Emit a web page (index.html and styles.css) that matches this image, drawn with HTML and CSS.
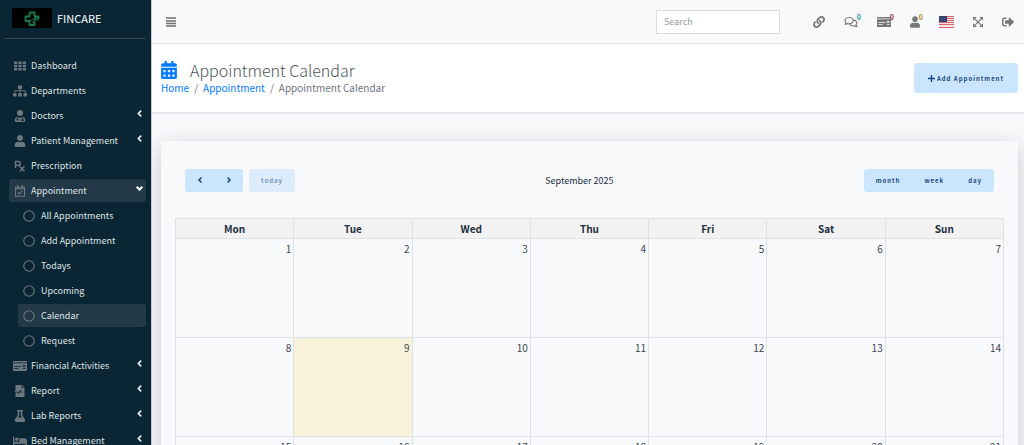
FILE: index.html
```html
<!DOCTYPE html>
<html lang="en">
<head>
    <meta charset="utf-8">
    <meta name="viewport" content="width=device-width, initial-scale=1">
    <title>Appointment Calendar</title>
    <link rel="stylesheet" href="styles.css">
</head>
<body>
    <!-- shared icons -->
    <svg class="sprite" aria-hidden="true">
        <symbol id="user" viewBox="0 0 448 512"><path d="M224 256c70.7 0 128-57.3 128-128S294.7 0 224 0 96 57.3 96 128s57.3 128 128 128zm89.6 32h-16.7c-22.2 10.2-46.9 16-72.9 16s-50.6-5.8-72.9-16h-16.7C60.2 288 0 348.2 0 422.4V464c0 26.5 21.5 48 48 48h352c26.5 0 48-21.5 48-48v-41.6c0-74.2-60.2-134.4-134.4-134.4z"/></symbol>
        <symbol id="money" viewBox="0 0 640 512"><path d="M0 448c0 17.67 14.33 32 32 32h576c17.67 0 32-14.33 32-32V128H0v320zm448-208c0-8.84 7.16-16 16-16h96c8.84 0 16 7.16 16 16v32c0 8.84-7.16 16-16 16h-96c-8.84 0-16-7.16-16-16v-32zm0 120c0-4.42 3.58-8 8-8h112c4.42 0 8 3.58 8 8v16c0 4.42-3.58 8-8 8H456c-4.42 0-8-3.58-8-8v-16zM64 264c0-4.42 3.58-8 8-8h304c4.42 0 8 3.58 8 8v16c0 4.42-3.58 8-8 8H72c-4.42 0-8-3.58-8-8v-16zm0 96c0-4.42 3.58-8 8-8h176c4.42 0 8 3.58 8 8v16c0 4.42-3.58 8-8 8H72c-4.42 0-8-3.58-8-8v-16zM624 32H16C7.16 32 0 39.16 0 48v48h640V48c0-8.84-7.16-16-16-16z"/></symbol>
        <symbol id="left" viewBox="0 0 10 16"><path d="M8 3L3 8l5 5" fill="none" stroke="currentColor" stroke-width="3"/></symbol>
        <symbol id="right" viewBox="0 0 10 16"><path d="M2 3l5 5-5 5" fill="none" stroke="currentColor" stroke-width="3"/></symbol>
        <symbol id="down" viewBox="0 0 16 10"><path d="M3 2l5 5 5-5" fill="none" stroke="currentColor" stroke-width="4"/></symbol>
        <symbol id="circle" viewBox="0 0 16 16"><circle cx="8" cy="8" r="7" fill="none" stroke="currentColor" stroke-width="1.5"/></symbol>
    </svg>

    <aside class="sidebar">
        <a class="brand" href="#">
            <svg class="brand-logo" viewBox="0 0 40 20" aria-hidden="true">
                <rect width="40" height="20" fill="#000"/>
                <path d="M17.5 4.500h5v4h4v3M22.500 14v3h-5v-4h-4V8.500h4v-4" fill="none" stroke="#1a7a4b" stroke-width="1.800" stroke-linejoin="round"/>
                <path d="M17 15c.5-3 2-4 7-4m-2-1h3v3M20.500 15l3-3" fill="none" stroke="#1a7a4b" stroke-width="1.200"/>
            </svg>
            <span>FINCARE</span>
        </a>
        <nav class="menu">
            <a href="#"><svg class="icon" viewBox="0 0 512 512"><path d="M0 60h140v108H0zM186 60h140v108H186zM372 60h140v108H372zM0 202h140v108H0zM186 202h140v108H186zM372 202h140v108H372zM0 344h140v108H0zM186 344h140v108H186zM372 344h140v108H372z"/></svg><span>Dashboard</span></a>
            <a href="#"><svg class="icon" viewBox="0 0 640 512"><path d="M128 352H32c-17.67 0-32 14.33-32 32v96c0 17.67 14.33 32 32 32h96c17.67 0 32-14.33 32-32v-96c0-17.67-14.33-32-32-32zm-24-80h192v48h48v-48h192v48h48v-57.59c0-21.17-17.23-38.41-38.41-38.41H344v-64h40c17.67 0 32-14.33 32-32V32c0-17.67-14.33-32-32-32H256c-17.67 0-32 14.33-32 32v96c0 17.67 14.33 32 32 32h40v64H94.41C73.23 224 56 241.23 56 262.41V320h48v-48zm264 80h-96c-17.67 0-32 14.33-32 32v96c0 17.67 14.33 32 32 32h96c17.67 0 32-14.33 32-32v-96c0-17.67-14.33-32-32-32zm240 0h-96c-17.67 0-32 14.33-32 32v96c0 17.67 14.33 32 32 32h96c17.67 0 32-14.33 32-32v-96c0-17.67-14.33-32-32-32z"/></svg><span>Departments</span></a>
            <a href="#"><svg class="icon" viewBox="0 0 448 512"><circle cx="224" cy="128" r="128"/><path fill-rule="evenodd" d="M104 290C40 306 0 360 0 425v43c0 26 18 44 44 44h360c26 0 44-18 44-44v-43c0-65-40-119-104-135v68c32 10 50 32 50 62v44h-58v-24h26v-20c0-42-66-42-66 0v20h26v24h-58v-44c0-30 18-52 50-62v-66l-90 64-90-64v86a40 40 0 1 1-30 0z"/></svg><span>Doctors</span><svg class="arrow"><use href="#left"/></svg></a>
            <a href="#"><svg class="icon"><use href="#user"/></svg><span>Patient Management</span><svg class="arrow"><use href="#left"/></svg></a>
            <a href="#"><svg class="icon" viewBox="0 0 16 16"><path d="M2 11V2h4a2.500 2.500 0 0 1 0 5H2m4 0l8 8m0-7l-6 7" fill="none" stroke="currentColor" stroke-width="1.800"/></svg><span>Prescription</span></a>
            <a class="active" href="#"><svg class="icon" viewBox="0 0 16 16"><path d="M2 3h12v12H2zM2 5h12M5 0v4M11 0v4M5 10l2 2 4-4" fill="none" stroke="currentColor" stroke-width="1.500"/></svg><span>Appointment</span><svg class="arrow"><use href="#down"/></svg></a>
            <div class="submenu">
                <a href="#"><svg class="icon"><use href="#circle"/></svg><span>All Appointments</span></a>
                <a href="#"><svg class="icon"><use href="#circle"/></svg><span>Add Appointment</span></a>
                <a href="#"><svg class="icon"><use href="#circle"/></svg><span>Todays</span></a>
                <a href="#"><svg class="icon"><use href="#circle"/></svg><span>Upcoming</span></a>
                <a class="active" href="#"><svg class="icon"><use href="#circle"/></svg><span>Calendar</span></a>
                <a href="#"><svg class="icon"><use href="#circle"/></svg><span>Request</span></a>
            </div>
            <a href="#"><svg class="icon"><use href="#money"/></svg><span>Financial Activities</span><svg class="arrow"><use href="#left"/></svg></a>
            <a href="#"><svg class="icon" viewBox="0 0 448 512"><path fill-rule="evenodd" d="M56 0h232v128h128v360c0 14-10 24-24 24H56c-14 0-24-10-24-24V320h110l34 70 58-116 26 46h76v-36h-54l-50-86-58 116-16-30H0v-60h32V24C32 10 42 0 56 0zM320 0l96 96h-96z"/></svg><span>Report</span><svg class="arrow"><use href="#left"/></svg></a>
            <a href="#"><svg class="icon" viewBox="0 0 448 512"><path d="M437.200 403.500L320 215V64h8c13.300 0 24-10.700 24-24V24c0-13.300-10.700-24-24-24H120c-13.300 0-24 10.700-24 24v16c0 13.300 10.700 24 24 24h8v151L10.800 403.500C-18.500 450.600 15.300 512 70.900 512h306.200c55.700 0 89.400-61.500 60.100-108.500zM137.900 320l48.200-77.600c3.700-5.200 5.800-11.600 5.800-18.400V64h64v160c0 6.900 2.200 13.200 5.800 18.400l48.200 77.600h-172z"/></svg><span>Lab Reports</span><svg class="arrow"><use href="#left"/></svg></a>
            <a href="#"><svg class="icon" viewBox="0 0 640 512"><path d="M176 256c44.110 0 80-35.890 80-80s-35.890-80-80-80-80 35.890-80 80 35.890 80 80 80zm352-128H304c-8.840 0-16 7.160-16 16v144H64V80c0-8.840-7.160-16-16-16H16C7.160 64 0 71.160 0 80v352c0 8.840 7.160 16 16 16h32c8.840 0 16-7.160 16-16v-48h512v48c0 8.840 7.160 16 16 16h32c8.840 0 16-7.160 16-16V240c0-61.860-50.140-112-112-112z"/></svg><span>Bed Management</span><svg class="arrow"><use href="#left"/></svg></a>
        </nav>
    </aside>

    <div class="main">
        <header class="navbar">
            <button class="toggle" aria-label="Toggle menu"><svg viewBox="0 0 10 10"><path d="M0 1h10M0 4h10M0 6.500h10M0 9h10" stroke="currentColor" stroke-width="1.400"/></svg></button>
            <input class="search" type="search" placeholder="Search" aria-label="Search">
            <nav class="tools">
                <a href="#" aria-label="Links"><svg viewBox="0 0 512 512"><path d="M326.612 185.391c59.747 59.809 58.927 155.698.36 214.590-.11.120-.24.250-.36.370l-67.200 67.200c-59.270 59.270-155.699 59.262-214.960 0-59.270-59.260-59.270-155.700 0-214.960l37.106-37.106c9.840-9.840 26.786-3.300 27.294 10.606.648 17.722 3.826 35.527 9.690 52.721 1.986 5.822.567 12.262-3.783 16.612l-13.087 13.087c-28.026 28.026-28.905 73.660-1.155 101.960 28.024 28.579 74.086 28.749 102.325.510l67.200-67.190c28.191-28.191 28.073-73.757 0-101.830-3.701-3.694-7.429-6.564-10.341-8.569a16.037 16.037 0 0 1-6.947-12.606c-.396-10.567 3.348-21.456 11.698-29.806l21.054-21.055c5.521-5.521 14.182-6.199 20.584-1.731a152.482 152.482 0 0 1 20.522 17.197zM467.547 44.449c-59.261-59.262-155.690-59.270-214.960 0l-67.200 67.200c-.12.120-.25.250-.36.370-58.566 58.892-59.387 154.781.360 214.590a152.454 152.454 0 0 0 20.521 17.196c6.402 4.468 15.064 3.789 20.584-1.731l21.054-21.055c8.350-8.350 12.094-19.239 11.698-29.806a16.037 16.037 0 0 0-6.947-12.606c-2.912-2.005-6.640-4.875-10.341-8.569-28.073-28.073-28.191-73.639 0-101.830l67.200-67.190c28.239-28.239 74.300-28.069 102.325.510 27.750 28.300 26.872 73.934-1.155 101.960l-13.087 13.087c-4.350 4.350-5.769 10.790-3.783 16.612 5.864 17.194 9.042 34.999 9.690 52.721.509 13.906 17.454 20.446 27.294 10.606l37.106-37.106c59.271-59.259 59.271-155.699.001-214.959z"/></svg></a>
                <a href="#" aria-label="Messages"><svg class="wide" viewBox="0 0 18 16"><path d="M1 11c1-1 1.300-1.800 1.200-2.500C-.5 5 2 2 6.500 2s7 4 4.500 6.500C9 10.500 6 10.500 4.500 10 3.500 10.700 2.300 11 1 11zM12.500 5.500c4 .3 5.500 3.500 3.300 6 0 .8.500 1.500 1.200 2.500-1.500 0-2.500-.3-3.500-1-2.500.7-5 0-6-2" fill="none" stroke="currentColor" stroke-width="1.500" stroke-linejoin="round"/></svg><span class="badge info">0</span></a>
                <a href="#" aria-label="Payments"><svg class="wide"><use href="#money"/></svg><span class="badge danger">0</span></a>
                <a href="#" aria-label="Users"><svg class="narrow"><use href="#user"/></svg><span class="badge warning">0</span></a>
                <a href="#" aria-label="Language"><svg class="flag" viewBox="0 0 15 12"><path fill="#f5e6e9" d="M0 0h15v12H0z"/><path d="M0 .5h15M0 2.500h15M0 4.500h15M0 6.500h15M0 8.500h15M0 11.500h15" stroke="#d9626f"/><path fill="#34406f" d="M0 0h8v6H0z"/><path d="M1 1.500h6M1 3h6M1 4.500h6" stroke="#7782a5" stroke-width=".5" stroke-dasharray=".7 .7"/></svg></a>
                <a href="#" aria-label="Full screen"><svg class="narrow" viewBox="0 0 16 16"><path d="M3 3l10 10M13 3L3 13" stroke="currentColor" stroke-width="2"/><path d="M0 0h6L0 6zM16 0v6l-6-6zM0 16v-6l6 6zM16 16h-6l6-6z"/></svg></a>
                <a href="#" aria-label="Log out"><svg viewBox="0 0 512 512"><path d="M497 273L329 441c-15 15-41 4.500-41-17v-96H152c-13.300 0-24-10.700-24-24v-96c0-13.300 10.700-24 24-24h136V88c0-21.400 25.900-32 41-17l168 168c9.300 9.400 9.300 24.600 0 34zM192 436v-40c0-6.600-5.400-12-12-12H96c-17.700 0-32-14.300-32-32V160c0-17.700 14.300-32 32-32h84c6.600 0 12-5.400 12-12V76c0-6.600-5.400-12-12-12H96c-53 0-96 43-96 96v192c0 53 43 96 96 96h84c6.600 0 12-5.400 12-12z"/></svg></a>
            </nav>
        </header>

        <section class="page-header">
            <div>
                <h1><svg viewBox="0 0 448 512"><path fill-rule="evenodd" d="M0 464c0 26.500 21.500 48 48 48h352c26.500 0 48-21.500 48-48V192H0zM64 256h64v64H64zM192 256h64v64h-64zM320 256h64v64h-64zM64 384h64v64H64zM192 384h64v64h-64zM320 384h64v64h-64zM436 160H12c-6.600 0-12-5.400-12-12v-36c0-26.500 21.500-48 48-48h48V12c0-6.600 5.400-12 12-12h40c6.600 0 12 5.400 12 12v52h128V12c0-6.600 5.400-12 12-12h40c6.600 0 12 5.400 12 12v52h48c26.500 0 48 21.500 48 48v36c0 6.600-5.400 12-12 12z"/></svg>Appointment Calendar</h1>
                <nav class="breadcrumb"><a href="#">Home</a><i>/</i><a href="#">Appointment</a><i>/</i><span>Appointment Calendar</span></nav>
            </div>
            <button class="btn add"><svg viewBox="0 0 8 8"><path d="M4 0v8M0 4h8" stroke="currentColor" stroke-width="1.600"/></svg>Add Appointment</button>
        </section>

        <section class="card">
            <div class="toolbar">
                <div class="left">
                    <div class="group">
                        <button class="btn nav" aria-label="Previous"><svg><use href="#left"/></svg></button>
                        <button class="btn nav" aria-label="Next"><svg><use href="#right"/></svg></button>
                    </div>
                    <button class="btn" disabled>today</button>
                </div>
                <h2>September 2025</h2>
                <div class="group">
                    <button class="btn">month</button>
                    <button class="btn">week</button>
                    <button class="btn">day</button>
                </div>
            </div>
            <table class="calendar">
                <thead>
                    <tr><th>Mon</th><th>Tue</th><th>Wed</th><th>Thu</th><th>Fri</th><th>Sat</th><th>Sun</th></tr>
                </thead>
                <tbody>
                    <tr><td>1</td><td>2</td><td>3</td><td>4</td><td>5</td><td>6</td><td>7</td></tr>
                    <tr><td>8</td><td class="today">9</td><td>10</td><td>11</td><td>12</td><td>13</td><td>14</td></tr>
                    <tr><td>15</td><td>16</td><td>17</td><td>18</td><td>19</td><td>20</td><td>21</td></tr>
                </tbody>
            </table>
        </section>
    </div>
</body>
</html>
```
FILE: styles.css
```css
* {
    box-sizing: border-box;
}

body {
    margin: 0;
    display: flex;
    height: 100vh;
    overflow: hidden;
    background: #f8f9fb;
    color: #212f3f;
    font-family: "Noto Sans CJK SC", "Open Sans", sans-serif;
    font-size: 10px;
    line-height: 16px;
}

h1, h2 {
    margin: 0;
    font-weight: 400;
}

a {
    color: #007bff;
    text-decoration: none;
}

svg {
    fill: currentColor;
}

button, input {
    font-family: inherit;
}

button {
    border: 0;
    cursor: pointer;
}

.sprite {
    display: none;
}

/* Sidebar */
.sidebar {
    flex: 0 0 151px;
    padding: 0 5px 0 4px;
    overflow: hidden;
    background: #0a2533;
}

.brand {
    display: flex;
    align-items: center;
    gap: 5px;
    height: 39px;
    padding: 0 0 2px 8px;
    border-bottom: 1px solid #34474f;
    color: #fff;
    font-size: 11px;
}

.brand-logo {
    width: 40px;
    height: 20px;
}

.menu {
    padding: 15px 0 0 5px;
}

.menu a {
    display: flex;
    align-items: center;
    height: 23px;
    margin-bottom: 2px;
    padding: 0 2px 0 4px;
    border-radius: 3px;
    color: #dfe4e6;
    font-size: 9px;
}

.menu .active {
    background: #233947;
}

.menu .icon {
    width: 14px;
    height: 12px;
    margin-right: 4px;
    color: #6c7880;
}

.menu .arrow {
    width: 9px;
    height: 9px;
    margin: 0 0 5px auto;
    color: #e8ecee;
}

.submenu {
    padding-left: 9px;
}

.submenu .icon {
    margin-right: 5px;
}

/* Top bar */
.main {
    flex: 1;
    min-width: 0;
    overflow: hidden;
    border-left: 1px solid #c5cbd0;
}

.navbar {
    display: flex;
    align-items: center;
    height: 44px;
    padding: 0 10px 0 14px;
    border-bottom: 1px solid #e4e6e9;
}

.toggle {
    padding: 0;
    background: none;
    color: #6f6f6f;
}

.toggle svg {
    display: block;
    width: 10px;
    height: 10px;
}

.search {
    width: 124px;
    height: 24px;
    margin: 0 33px 0 auto;
    padding: 0 7px;
    border: 1px solid #dadde0;
    background: #fff;
    font-size: 9px;
}

.search::placeholder {
    color: #939ba2;
}

.tools {
    display: flex;
    gap: 19px;
    color: #777;
}

.tools a {
    position: relative;
    display: flex;
    color: inherit;
}

.tools svg {
    width: 12px;
    height: 12px;
}

.tools .wide {
    width: 14px;
}

.tools .narrow {
    width: 10px;
}

.tools .flag {
    width: 15px;
}

.badge {
    position: absolute;
    top: -4px;
    right: -3px;
    font-size: 7px;
    font-weight: 700;
    line-height: 10px;
}

.info {
    color: #1f8ea3;
}

.danger {
    color: #a02a3a;
}

.warning {
    color: #ab8f1c;
}

/* Page header */
.page-header {
    display: flex;
    justify-content: space-between;
    align-items: center;
    height: 68px;
    padding: 0 6px 0 9px;
    background: #fff;
    box-shadow: 0 1px 2px #d9dbdf;
}

h1 {
    display: flex;
    align-items: center;
    gap: 13px;
    color: #4b545c;
    font-size: 16px;
    font-weight: 300;
    line-height: 20px;
}

h1 svg {
    width: 16px;
    height: 18px;
    color: #007bff;
}

.breadcrumb {
    display: flex;
    gap: 5px;
    color: #6c757d;
    font-size: 10px;
}

.breadcrumb i {
    font-style: normal;
}

.btn {
    height: 23px;
    padding: 0 12px;
    border-radius: 3px;
    background: #cce5ff;
    color: #174a7c;
    font-size: 6px;
    font-weight: 700;
    letter-spacing: 1px;
}

.btn:disabled {
    background: #dcecfd;
    color: #7593b4;
}

.add {
    display: flex;
    align-items: center;
    gap: 2px;
    height: 30px;
    padding: 0 14px;
}

.add svg {
    width: 7px;
    height: 7px;
}

/* Calendar */
.card {
    min-height: 100vh;
    margin: 29px 6px 0 9px;
    padding: 28px 14px;
    background: #f8f9fb;
    box-shadow: 0 6px 20px #c6c8cb;
}

.toolbar {
    display: flex;
    justify-content: space-between;
    align-items: center;
    margin-bottom: 26px;
    padding: 0 10px;
}

.left {
    display: flex;
    gap: 6px;
}

.group {
    display: flex;
    overflow: hidden;
    border-radius: 3px;
}

.group .btn {
    border-radius: 0;
}

.nav {
    width: 29px;
    padding: 0;
}

.nav svg {
    width: 8px;
    height: 8px;
}

h2 {
    font-size: 9px;
}

.calendar {
    width: 100%;
    table-layout: fixed;
    border-collapse: collapse;
}

.calendar th, .calendar td {
    border: 1px solid #dfe1e4;
}

.calendar th {
    height: 20px;
    padding: 0;
    background: #f2f2f2;
    font-size: 10px;
    line-height: 14px;
}

.calendar td {
    height: 99px;
    padding: 2px;
    color: #3c4653;
    text-align: right;
    vertical-align: top;
}

.calendar .today {
    background: #f8f3da;
}
```
